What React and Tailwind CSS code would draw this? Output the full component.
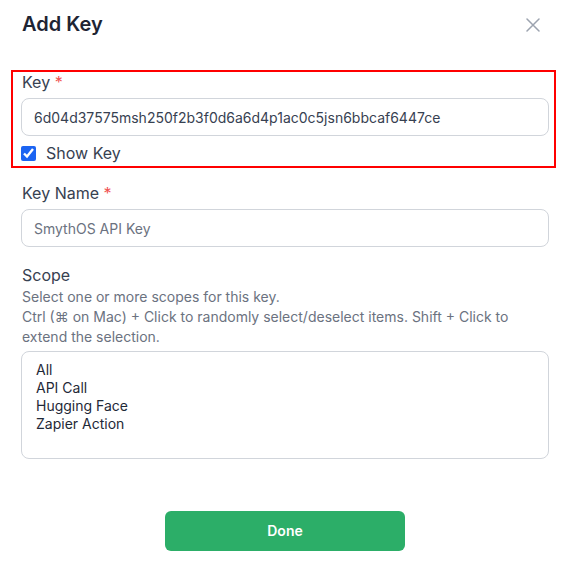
import React, { useState } from 'react';

const scopes = ['All', 'API Call', 'Hugging Face', 'Zapier Action'];

const AddKeyModal = () => {
  const [showKey, setShowKey] = useState(true);
  const [keyValue, setKeyValue] = useState('6d04d37575msh250f2b3f0d6a6d4p1ac0c5jsn6bbcaf6447ce');

  return (
    <div className="w-[566px] h-[572px] bg-white font-['Inter',sans-serif] antialiased pl-[21px] pr-[17px]">
      {/* Header */}
      <div className="flex items-center justify-between h-[46px] pt-[2px]">
        <h2 className="text-[20px] font-semibold text-[#1e2433] pl-px">Add Key</h2>
        <button className="text-[#9ca3af] mr-[9px] mt-[2px]">
          <svg width="14" height="14" viewBox="0 0 14 14" fill="none" stroke="currentColor" strokeWidth="1.5" strokeLinecap="round">
            <path d="M1 1L13 13M13 1L1 13" />
          </svg>
        </button>
      </div>

      {/* Key (highlighted) */}
      <div className="mt-[24px] -ml-[10px] -mr-[7px] border-2 border-[#ff0000] pl-2 pr-[5px] pb-[4px]">
        <label className="block text-base leading-[20px] text-[#374151] pl-px">
          Key <span className="text-[#f05252]">*</span>
        </label>
        <input
          type="text"
          value={keyValue}
          onChange={(e) => setKeyValue(e.target.value)}
          className="mt-[6px] w-full h-[38px] px-[12px] text-sm text-[#374151] border border-[#d1d5db] rounded-lg outline-none"
        />
        <label className="flex items-center gap-[10px] mt-[8px] h-[18px] text-base text-[#374151]">
          <input
            type="checkbox"
            checked={showKey}
            onChange={(e) => setShowKey(e.target.checked)}
            className="w-[15px] h-[15px] accent-[#1c64f2] m-0"
          />
          Show Key
        </label>
      </div>

      {/* Key Name */}
      <div className="mt-[15px]">
        <label className="block text-base leading-[20px] text-[#374151] pl-px">
          Key Name <span className="text-[#f05252]">*</span>
        </label>
        <input
          type="text"
          placeholder="SmythOS API Key"
          className="mt-[6px] w-full h-[38px] px-[12px] text-sm text-[#374151] placeholder:text-[#6b7280] border border-[#d1d5db] rounded-lg outline-none"
        />
      </div>

      {/* Scope */}
      <div className="mt-[18px]">
        <label className="block text-base leading-[20px] text-[#374151] pl-px">Scope</label>
        <p className="mt-[2px] text-sm leading-5 text-[#6b7280] pl-px">
          Select one or more scopes for this key.
          <br />
          Ctrl (⌘ on Mac) + Click to randomly select/deselect items. Shift + Click to extend the selection.
        </p>
        <div className="mt-[4px] w-full h-[108px] border border-[#d1d5db] rounded-lg px-[14px] pt-[9px]">
          {scopes.map((s) => (
            <div key={s} className="text-sm leading-[18px] text-[#1f2937]">{s}</div>
          ))}
        </div>
      </div>

      {/* Footer */}
      <div className="flex justify-center mt-[52px]">
        <button className="w-[240px] h-[40px] rounded-md bg-[#2cae68] text-white text-sm font-semibold">
          Done
        </button>
      </div>
    </div>
  );
};

export default function App() {
  return <AddKeyModal />;
}
